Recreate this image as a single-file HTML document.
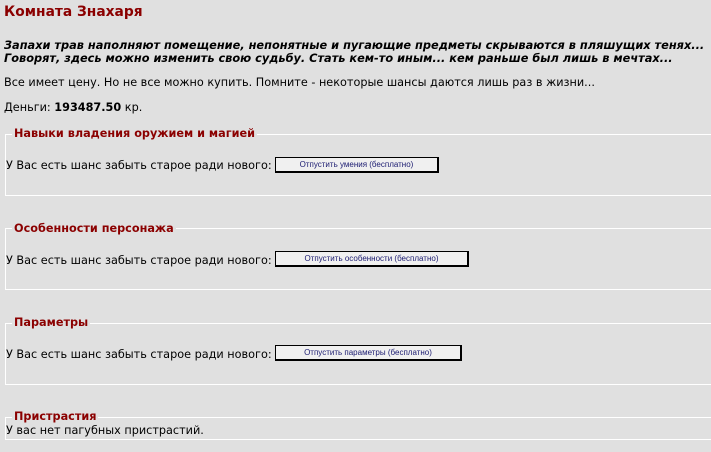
<!DOCTYPE html>
<html><head><meta charset="utf-8"><style>
body{margin:0;width:711px;height:452px;background:#e0e0e0;font-family:"DejaVu Sans",Verdana,sans-serif;font-size:11.25px;color:#000;position:relative;overflow:hidden}
.a{position:absolute;white-space:nowrap;line-height:13px}
.h{color:#8b0000;font-weight:bold}
.fs{position:absolute;left:5px;width:720px;border:1px solid #fff;border-right:none}
.btn{position:absolute;background:#f0f0f0;border:1px solid #000;border-width:1px 2px 2px 1px;font-family:"Liberation Sans",sans-serif;font-size:8px;color:#1a1a70;text-align:center;line-height:13px;box-sizing:border-box;height:16px}
.lg{position:absolute;background:#e0e0e0;padding:0 2px}
</style></head><body>
<div class="a h" style="left:4px;top:4px;font-size:13.8px;line-height:17px">Комната Знахаря</div>
<div class="a" style="left:4px;top:39px;font-weight:bold;font-style:italic;font-size:11.35px">Запахи трав наполняют помещение, непонятные и пугающие предметы скрываются в пляшущих тенях...<br>Говорят, здесь можно изменить свою судьбу. Стать кем-то иным... кем раньше был лишь в мечтах...</div>
<div class="a" style="left:4px;top:76px">Все имеет цену. Но не все можно купить. Помните - некоторые шансы даются лишь раз в жизни...</div>
<div class="a" style="left:4px;top:101px">Деньги: <b>193487.50</b> кр.</div>

<div class="fs" style="top:134px;height:60px"></div>
<div class="a h lg" style="left:12px;top:127px">Навыки владения оружием и магией</div>
<div class="a" style="left:6px;top:159px">У Вас есть шанс забыть старое ради нового:</div>
<div class="btn" style="left:275px;top:157px;width:164px">Отпустить умения (бесплатно)</div>

<div class="fs" style="top:228px;height:60px"></div>
<div class="a h lg" style="left:12px;top:222px">Особенности персонажа</div>
<div class="a" style="left:6px;top:254px">У Вас есть шанс забыть старое ради нового:</div>
<div class="btn" style="left:275px;top:251px;width:194px">Отпустить особенности (бесплатно)</div>

<div class="fs" style="top:323px;height:60px"></div>
<div class="a h lg" style="left:12px;top:316px">Параметры</div>
<div class="a" style="left:6px;top:348px">У Вас есть шанс забыть старое ради нового:</div>
<div class="btn" style="left:275px;top:345px;width:187px">Отпустить параметры (бесплатно)</div>

<div class="fs" style="top:417px;height:21px"></div>
<div class="a h lg" style="left:12px;top:410px">Пристрастия</div>
<div class="a" style="left:6px;top:424px">У вас нет пагубных пристрастий.</div>
</body></html>
